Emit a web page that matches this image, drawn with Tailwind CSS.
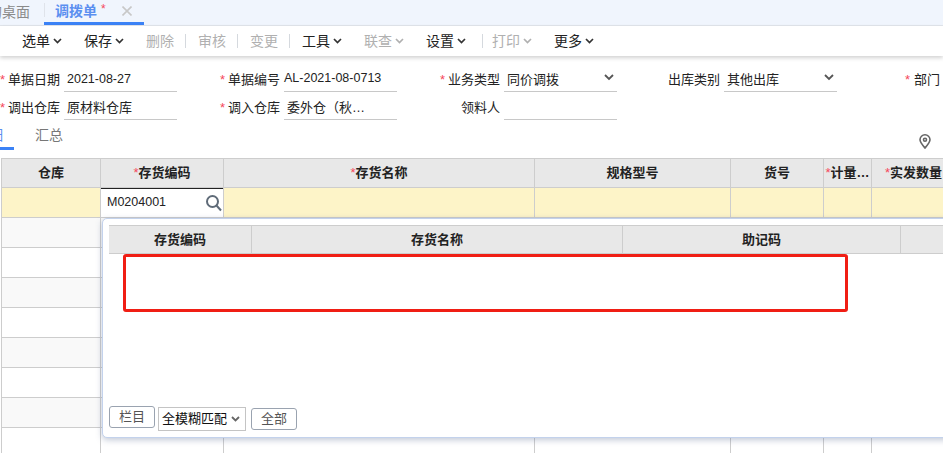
<!DOCTYPE html>
<html lang="zh-CN">
<head>
  <meta charset="UTF-8" />
  <title>调拨单</title>
  <script src="https://cdn.jsdelivr.net/npm/@tailwindcss/browser@4"></script>
</head>
<body class="w-[943px] h-[453px] overflow-hidden bg-white text-[13px] text-[#222] font-['Liberation_Sans','Noto_Sans_CJK_SC',sans-serif]">

  <!-- Tabs -->
  <div class="flex h-[26px] bg-[#f0f5fd] border-b border-[#e2e6ec] overflow-hidden">
    <div class="w-[44px] h-[25px] flex justify-end items-center pr-[14px] text-[14px] text-[#8a8a8a] whitespace-nowrap">的桌面</div>
    <div class="relative w-[100px] h-[25px] border-b-[3px] border-[#3b82f6] pl-[11px] flex items-center">
      <span class="absolute left-0 top-[3px] h-[14px] w-px bg-[#dfe3ea]"></span>
      <span class="text-[14px] font-bold text-[#5b8ff0]">调拨单</span>
      <span class="text-[#f5475b] ml-[4px] -mt-[4px] text-[12px]">*</span>
      <svg class="ml-[16px]" width="10" height="10" viewBox="0 0 10 10" fill="none" stroke="#c8c8c8" stroke-width="1.6"><path d="M0.5 0.5 9.5 9.5M9.5 0.5 0.5 9.5" /></svg>
    </div>
  </div>

  <!-- Toolbar -->
  <div class="relative flex items-center h-[30px] pl-[22px] text-[14px] shadow-[0_2px_4px_rgba(0,0,0,0.18)] bg-white">
    <div class="w-[62px] flex items-center gap-[3px]">选单<svg width="9" height="6" viewBox="0 0 9 6" fill="none" stroke="#333" stroke-width="1.7"><path d="M1 1 4.5 4.5 8 1" /></svg></div>
    <div class="w-[62px] flex items-center gap-[3px]">保存<svg width="9" height="6" viewBox="0 0 9 6" fill="none" stroke="#333" stroke-width="1.7"><path d="M1 1 4.5 4.5 8 1" /></svg></div>
    <div class="w-[52px] flex items-center text-[#b0b0b0]">删除<span class="ml-[11px] w-px h-[14px] bg-[#d5d9de]"></span></div>
    <div class="w-[52px] flex items-center text-[#b0b0b0]">审核<span class="ml-[11px] w-px h-[14px] bg-[#d5d9de]"></span></div>
    <div class="w-[52px] flex items-center text-[#b0b0b0]">变更<span class="ml-[11px] w-px h-[14px] bg-[#d5d9de]"></span></div>
    <div class="w-[62px] flex items-center gap-[3px]">工具<svg width="9" height="6" viewBox="0 0 9 6" fill="none" stroke="#333" stroke-width="1.7"><path d="M1 1 4.5 4.5 8 1" /></svg></div>
    <div class="w-[62px] flex items-center gap-[3px] text-[#b0b0b0]">联查<svg width="9" height="6" viewBox="0 0 9 6" fill="none" stroke="#b0b0b0" stroke-width="1.7"><path d="M1 1 4.5 4.5 8 1" /></svg></div>
    <div class="w-[66px] flex items-center gap-[3px]">设置<svg width="9" height="6" viewBox="0 0 9 6" fill="none" stroke="#333" stroke-width="1.7"><path d="M1 1 4.5 4.5 8 1" /></svg><span class="ml-[13px] w-px h-[14px] bg-[#d5d9de]"></span></div>
    <div class="w-[62px] flex items-center gap-[3px] text-[#b0b0b0]">打印<svg width="9" height="6" viewBox="0 0 9 6" fill="none" stroke="#b0b0b0" stroke-width="1.7"><path d="M1 1 4.5 4.5 8 1" /></svg></div>
    <div class="flex items-center gap-[3px]">更多<svg width="9" height="6" viewBox="0 0 9 6" fill="none" stroke="#333" stroke-width="1.7"><path d="M1 1 4.5 4.5 8 1" /></svg></div>
  </div>

  <!-- Form -->
  <div class="pt-[8px] whitespace-nowrap">
    <div class="flex h-[28px]">
      <div class="flex w-[220px] shrink-0 items-end"><label class="w-[64px] h-[27px] flex justify-between pr-[4px] pt-[5px]"><span class="text-[#f5475b]">*</span>单据日期</label><div class="w-[113px] h-[27px] border-b border-[#c8c8c8] pl-[3px] pt-[5px] text-[12.5px]">2021-08-27</div></div>
      <div class="flex w-[220px] shrink-0 items-end"><label class="w-[64px] h-[27px] flex justify-between pr-[4px] pt-[5px]"><span class="text-[#f5475b]">*</span>单据编号</label><div class="w-[113px] h-[27px] border-b border-[#c8c8c8] pt-[4px] text-[12.5px]">AL-2021-08-0713</div></div>
      <div class="flex w-[220px] shrink-0 items-end"><label class="w-[64px] h-[27px] flex justify-between pr-[4px] pt-[5px]"><span class="text-[#f5475b]">*</span>业务类型</label><div class="w-[113px] h-[27px] border-b border-[#c8c8c8] pl-[3px] pt-[5px] flex justify-between pr-[3px]">同价调拨<svg class="mt-[4px]" width="10" height="7" viewBox="0 0 10 7" fill="none" stroke="#555" stroke-width="1.8"><path d="M1 1 5 5 9 1" /></svg></div></div>
      <div class="flex w-[220px] shrink-0 items-end"><label class="w-[64px] h-[27px] flex justify-end pr-[4px] pt-[5px]">出库类别</label><div class="w-[113px] h-[27px] border-b border-[#c8c8c8] pl-[3px] pt-[5px] flex justify-between pr-[3px]">其他出库<svg class="mt-[4px]" width="10" height="7" viewBox="0 0 10 7" fill="none" stroke="#555" stroke-width="1.8"><path d="M1 1 5 5 9 1" /></svg></div></div>
      <div class="flex w-[220px] shrink-0 items-end"><label class="w-[64px] h-[27px] flex justify-end pr-[4px] pt-[5px]"><span class="text-[#f5475b] mr-[4px]">*</span>部门</label></div>
    </div>
    <div class="flex h-[28px]">
      <div class="flex w-[220px] shrink-0 items-end"><label class="w-[64px] h-[27px] flex justify-between pr-[4px] pt-[5px]"><span class="text-[#f5475b]">*</span>调出仓库</label><div class="w-[113px] h-[27px] border-b border-[#c8c8c8] pl-[3px] pt-[5px]">原材料仓库</div></div>
      <div class="flex w-[220px] shrink-0 items-end"><label class="w-[64px] h-[27px] flex justify-between pr-[4px] pt-[5px]"><span class="text-[#f5475b]">*</span>调入仓库</label><div class="w-[113px] h-[27px] border-b border-[#c8c8c8] pl-[3px] pt-[5px]">委外仓（秋…</div></div>
      <div class="flex w-[220px] shrink-0 items-end"><label class="w-[64px] h-[27px] flex justify-end pr-[4px] pt-[5px]">领料人</label><div class="w-[113px] h-[27px] border-b border-[#c8c8c8]"></div></div>
    </div>
  </div>

  <!-- Sub tabs -->
  <div class="flex justify-between h-[38px] text-[14px]">
    <div class="flex">
      <div class="w-[14px] h-[30px] border-b-[3px] border-[#3b82f6] pt-[5px]"><div class="w-[3px] overflow-hidden flex justify-end text-[#5b8ff0]"><span class="shrink-0">明细</span></div></div>
      <div class="ml-[21px] pt-[5px] text-[#777]">汇总</div>
    </div>
    <svg class="mr-[12px] mt-[14px]" width="12" height="15" viewBox="0 0 12 15" fill="none" stroke="#666" stroke-width="1.6"><path d="M6 14C3 10.5 1 8.200 1 5.800A5 5 0 0 1 11 5.800C11 8.200 9 10.500 6 14Z" /><circle cx="6" cy="5.800" r="1.500" /></svg>
  </div>

  <!-- Grid -->
  <div class="relative">
    <table class="ml-px w-[1070px] table-fixed border-collapse">
      <colgroup>
        <col class="w-[99px]" /><col class="w-[123px]" /><col class="w-[311px]" /><col class="w-[196px]" /><col class="w-[93px]" /><col class="w-[48px]" /><col class="w-[200px]" />
      </colgroup>
      <thead>
        <tr class="h-[29px] bg-[#e8e8e8] font-bold">
          <th class="border border-[#cdcdcd] font-bold">仓库</th>
          <th class="border border-[#cdcdcd] font-bold"><span class="text-[#f5475b] font-normal">*</span>存货编码</th>
          <th class="border border-[#cdcdcd] font-bold"><span class="text-[#f5475b] font-normal">*</span>存货名称</th>
          <th class="border border-[#cdcdcd] font-bold">规格型号</th>
          <th class="border border-[#cdcdcd] font-bold">货号</th>
          <th class="border border-[#cdcdcd] font-bold whitespace-nowrap overflow-hidden"><span class="text-[#f5475b] font-normal">*</span>计量…</th>
          <th class="border border-[#cdcdcd] font-bold text-left pl-[13px]"><span class="text-[#f5475b] font-normal">*</span>实发数量</th>
        </tr>
      </thead>
      <tbody id="rows">
        <tr class="h-[30px] bg-[#fdf4c8]">
          <td class="border border-[#cdcdcd]"></td>
          <td class="border border-[#cdcdcd] p-0">
            <div class="h-[30px] -m-px bg-white border border-[#222] flex items-center justify-between pl-[6px] text-[12.5px]">M0204001
              <svg width="18" height="18" viewBox="0 0 18 18" fill="none" stroke="#5f6b78" stroke-width="2"><circle cx="7.500" cy="7.500" r="5.500" /><path d="M11.500 11.500 16 16.500" /></svg>
            </div>
          </td>
          <td class="border border-[#cdcdcd]"></td><td class="border border-[#cdcdcd]"></td><td class="border border-[#cdcdcd]"></td><td class="border border-[#cdcdcd]"></td><td class="border border-[#cdcdcd]"></td>
        </tr>
      </tbody>
    </table>

    <!-- Dropdown panel over the grid -->
    <div class="absolute left-[102px] top-[60px] w-[860px] h-[220px] bg-white rounded-[5px] border border-[#c3d2ec] shadow-[0_2px_6px_rgba(80,100,140,0.35)] pt-[6px] pl-[6px]">
      <div class="flex h-[29px] bg-[#e8e8e8] border-y border-[#cdcdcd] font-bold">
        <div class="w-[143px] flex items-center justify-center border-r border-[#cdcdcd]">存货编码</div>
        <div class="w-[371px] flex items-center justify-center border-r border-[#cdcdcd]">存货名称</div>
        <div class="w-[278px] flex items-center justify-center border-r border-[#cdcdcd]">助记码</div>
      </div>
      <div class="ml-[14px] w-[725px] h-[58px] border-[3px] border-[#f01e14] rounded-[3px]"></div>
      <div class="absolute left-[6px] bottom-[6px] flex items-start">
        <button class="w-[46px] h-[22px] bg-white border border-[#9aa3b0] rounded-[3px] text-[#555]">栏目</button>
        <div class="ml-[3px] mt-px w-[88px] h-[24px] bg-white border border-[#c4c4c4] flex items-center justify-between pl-[3px] pr-[5px] text-[#111] whitespace-nowrap">全模糊匹配<svg width="9" height="6" viewBox="0 0 9 6" fill="none" stroke="#666" stroke-width="1.8"><path d="M1 1 4.500 4.500 8 1" /></svg></div>
        <button class="ml-[5px] mt-[2px] w-[46px] h-[22px] bg-white border border-[#9aa3b0] rounded-[3px] text-[#555]">全部</button>
      </div>
    </div>
  </div>

  <script>
    // empty rows under the active one, striped
    const tbody = document.getElementById("rows");
    for (let i = 0; i < 8; i++) {
      const tr = document.createElement("tr");
      tr.className = i % 2 === 0 ? "h-[30px] bg-[#f9f9f9]" : "h-[30px] bg-white";
      tr.innerHTML = '<td class="border border-[#cdcdcd]"></td>'.repeat(7);
      tbody.appendChild(tr);
    }
  </script>
</body>
</html>
